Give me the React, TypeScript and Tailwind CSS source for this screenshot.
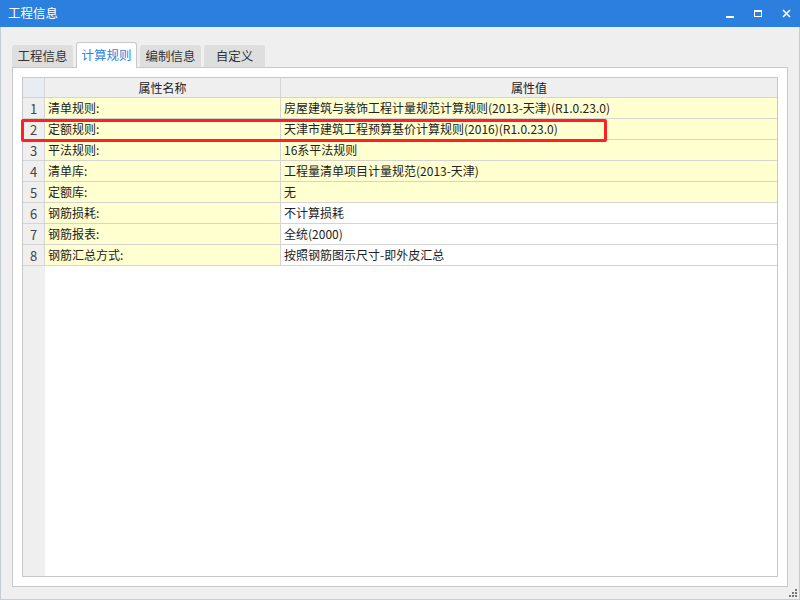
import * as React from "react"

const rows = [
  { name: "清单规则:", value: "房屋建筑与装饰工程计量规范计算规则(2013-天津)(R1.0.23.0)", hl: true },
  { name: "定额规则:", value: "天津市建筑工程预算基价计算规则(2016)(R1.0.23.0)", hl: true },
  { name: "平法规则:", value: "16系平法规则", hl: true },
  { name: "清单库:", value: "工程量清单项目计量规范(2013-天津)", hl: true },
  { name: "定额库:", value: "无", hl: true },
  { name: "钢筋损耗:", value: "不计算损耗", hl: false },
  { name: "钢筋报表:", value: "全统(2000)", hl: false },
  { name: "钢筋汇总方式:", value: "按照钢筋图示尺寸-即外皮汇总", hl: false },
]

const tabs = ["工程信息", "计算规则", "编制信息", "自定义"]

export default function App() {
  return (
    <div
      className="w-[800px] h-[600px] flex flex-col bg-[#efefef] text-[#222] text-[12px] leading-none overflow-hidden"
      style={{ fontFamily: '"Microsoft YaHei", "Noto Sans CJK SC", "Noto Sans", sans-serif' }}
    >
      {/* title bar */}
      <div className="h-[27px] shrink-0 bg-[#2b7fdf] flex items-center pl-[8px] text-white">
        <span className="text-[12.5px]">工程信息</span>
        <div className="ml-auto flex items-center h-full">
          <div className="w-[28px] h-full flex items-center justify-center">
            <div className="w-[8px] h-[2px] bg-white mt-[6px]" />
          </div>
          <div className="w-[28px] h-full flex items-center justify-center">
            <div className="w-[8px] h-[7px] border border-white border-t-2" />
          </div>
          <div className="w-[28px] h-full flex items-center justify-center">
            <svg width="9" height="9" viewBox="0 0 9 9">
              <path d="M1 1L8 8M8 1L1 8" stroke="white" strokeWidth="1.6" />
            </svg>
          </div>
        </div>
      </div>

      {/* body */}
      <div className="flex-1 flex flex-col border-l border-r border-b border-[#c4ccd6] pl-[11px] pr-[11px] pb-[12px] pt-[15px] relative">
        <div className="flex items-end gap-[3px] h-[25px] relative z-10">
          {tabs.map((t, i) =>
            i === 1 ? (
              <div
                key={t}
                className="h-[26px] w-[61px] -mb-px bg-white border border-b-0 border-[#c8c8c8] rounded-t-[3px] flex items-center justify-center text-[#2b7fdf] text-[12.5px]"
              >
                {t}
              </div>
            ) : (
              <div
                key={t}
                className="h-[22px] w-[61px] bg-[#dedede] rounded-t-[3px] flex items-center justify-center text-[12.5px] text-[#333]"
              >
                {t}
              </div>
            )
          )}
        </div>

        <div className="flex-1 bg-white border border-[#c8c8c8] p-[9px] flex">
          <div className="flex-1 flex flex-col border border-[#c8c8c8] relative">
            {/* header */}
            <div className="flex h-[20px] border-b border-[#d4d4d4]">
              <div className="w-[22px] shrink-0 bg-[#e8edf3] border-r border-[#d4d4d4]" />
              <div className="w-[236px] shrink-0 bg-[#efefef] border-r border-[#d4d4d4] flex items-center justify-center">
                属性名称
              </div>
              <div className="flex-1 bg-[#efefef] flex items-center justify-center">属性值</div>
            </div>

            {rows.map((r, i) => (
              <div key={i} className="flex h-[21px] border-b border-[#d4d4d4]">
                <div className="w-[22px] shrink-0 bg-[#efefef] border-r border-[#d4d4d4] flex items-center justify-center text-[13px] text-[#444]">
                  {i + 1}
                </div>
                <div className="w-[236px] shrink-0 bg-[#ffffd0] border-r border-[#d4d4d4] flex items-center pl-[3px]">
                  {r.name}
                </div>
                <div className={`flex-1 flex items-center pl-[3px] ${r.hl ? "bg-[#ffffd0]" : "bg-white"}`}>
                  {r.value}
                </div>
              </div>
            ))}

            <div className="flex-1 flex">
              <div className="w-[22px] shrink-0 bg-[#efefef]" />
              <div className="flex-1 bg-white" />
            </div>

            {/* highlight box */}
            <div className="absolute left-[-2px] top-[41px] w-[586px] h-[23px] border-[3px] border-[#ff2020] rounded-[2px] pointer-events-none" />
          </div>
        </div>

        {/* resize grip */}
        <svg className="absolute right-[2px] bottom-[2px]" width="8" height="8" viewBox="0 0 8 8">
          <rect x="6" y="0" width="2" height="2" fill="#777" />
          <rect x="3" y="3" width="2" height="2" fill="#777" />
          <rect x="6" y="3" width="2" height="2" fill="#777" />
          <rect x="0" y="6" width="2" height="2" fill="#777" />
          <rect x="3" y="6" width="2" height="2" fill="#777" />
          <rect x="6" y="6" width="2" height="2" fill="#777" />
        </svg>
      </div>
    </div>
  )
}
